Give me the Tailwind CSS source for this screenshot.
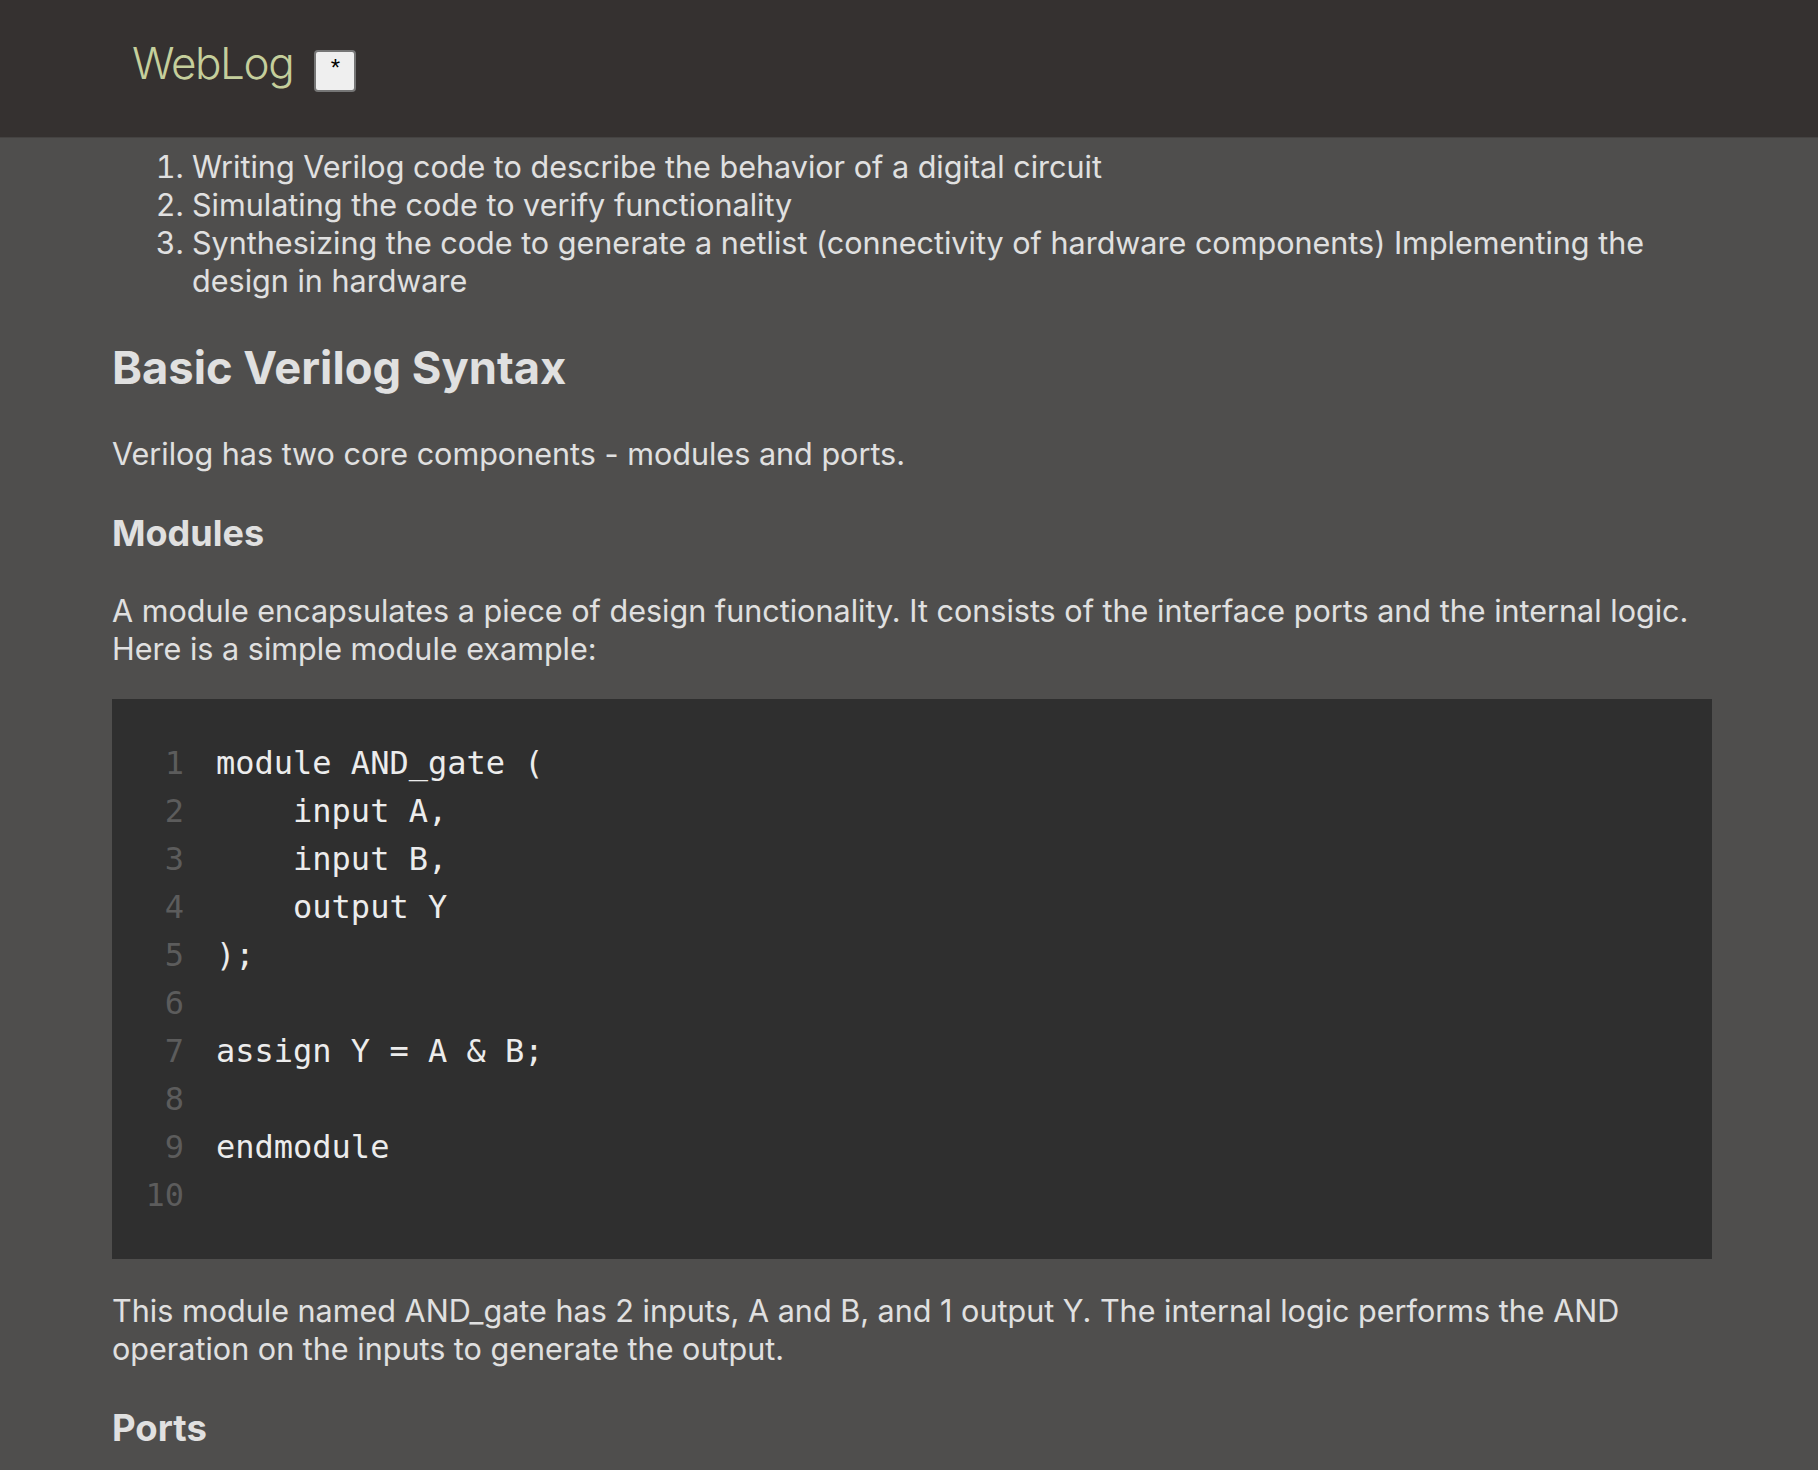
<!DOCTYPE html>
<html lang="en">
  <head>
    <meta charset="UTF-8" />
    <meta name="viewport" content="width=device-width, initial-scale=1.0" />
    <title>WebLog</title>
    <script src="https://cdn.jsdelivr.net/npm/@tailwindcss/browser@4"></script>
  </head>

  <body class="h-screen overflow-hidden bg-[#4f4e4d] text-[#e0e0e0] font-['Inter',sans-serif]">
    <!-- Header -->
    <header class="h-[138px] bg-[#353130] border-b border-b-[#454342] flex items-start pl-[132px]">
      <h1 class="text-[44px] leading-[54px] mt-[36px] font-light tracking-[-1.4px] text-[#c5cf9c]">WebLog</h1>
      <button class="ml-[21px] mt-[50px] w-[42px] h-[42px] bg-[#efefef] border-2 border-[#767676] rounded-[4px] text-black text-[24px] leading-[24px] pb-[7px] font-['Liberation_Sans',sans-serif]">*</button>
    </header>

    <!-- Post -->
    <main class="pl-[112px] pr-[106px] text-[30.56px] leading-[38px]">
      <ol class="list-decimal pl-[80px] pt-[10px]">
        <li>Writing Verilog code to describe the behavior of a digital circuit</li>
        <li>Simulating the code to verify functionality</li>
        <li>Synthesizing the code to generate a netlist (connectivity of hardware components) Implementing the design in hardware</li>
      </ol>

      <h2 class="mt-[40px] mb-[39px] text-[45.3px] leading-[56px] font-bold">Basic Verilog Syntax</h2>
      <p>Verilog has two core components - modules and ports.</p>

      <h3 class="mt-[38px] mb-[37px] text-[36px] leading-[44px] font-bold">Modules</h3>
      <p>A module encapsulates a piece of design functionality. It consists of the interface ports and the internal logic. Here is a simple module example:</p>

      <!-- Code block -->
      <div class="mt-[31px] h-[560px] bg-[#2f2f2f] py-[40px] flex font-['DejaVu_Sans_Mono',monospace] text-[32px] leading-[48px]">
        <div class="w-[104px] pr-[32px] text-right text-[#5c5c5c] shrink-0">
          <div>1</div><div>2</div><div>3</div><div>4</div><div>5</div><div>6</div><div>7</div><div>8</div><div>9</div><div>10</div>
        </div>
        <pre class="font-['DejaVu_Sans_Mono',monospace] text-[#ececec]">module AND_gate (
    input A,
    input B,
    output Y
);

assign Y = A &amp; B;

endmodule
</pre>
      </div>

      <p class="mt-[33px]">This module named AND_gate has 2 inputs, A and B, and 1 output Y. The internal logic performs the AND operation on the inputs to generate the output.</p>

      <h3 class="mt-[38px] text-[36.5px] leading-[44px] font-bold">Ports</h3>
    </main>
  </body>
</html>
